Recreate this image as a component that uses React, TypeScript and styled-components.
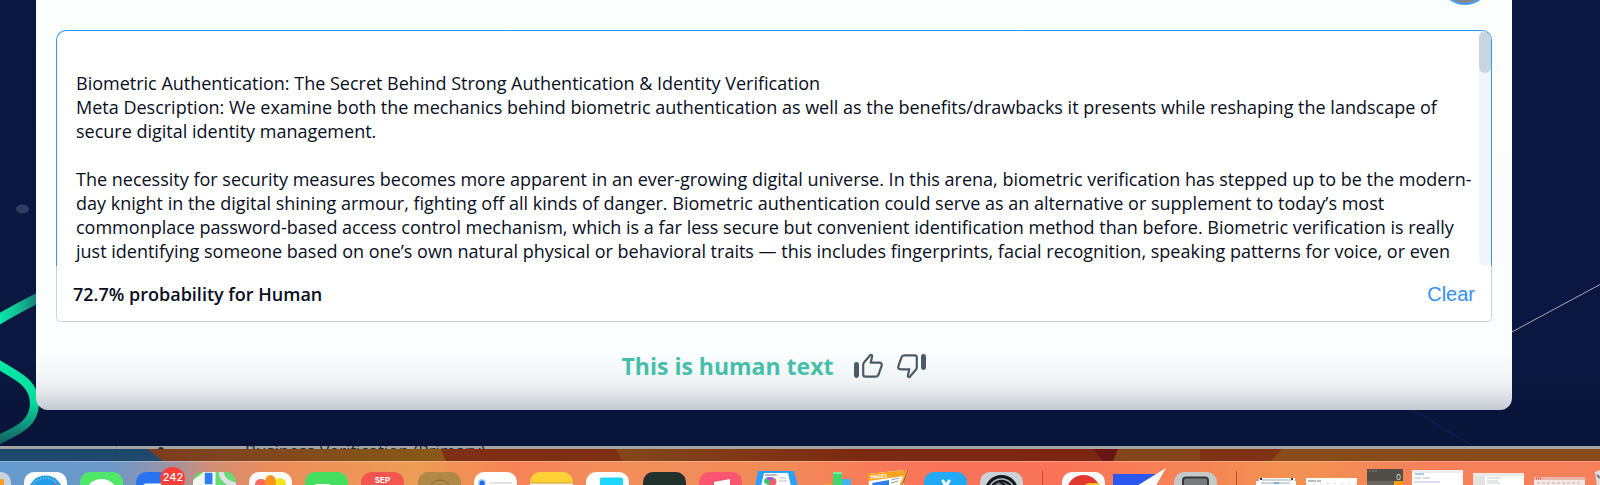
import React from "react";
import styled, { createGlobalStyle } from "styled-components";

const GlobalStyle = createGlobalStyle`
  *, *::before, *::after { box-sizing: border-box; }
  body {
    margin: 0;
    background: #f5825c;
    font-family: "Open Sans", "Noto Sans", sans-serif;
    overflow-x: hidden;
  }
`;

const Page = styled.main`
  display: flex;
  flex-direction: column;
  overflow: hidden;
`;

const Hero = styled.section`
  position: relative;
  padding: 0 88px 36px 36px;
  background: linear-gradient(#0a1741 0, #0a1740 82%, #081438 100%);
`;

const Backdrop = styled.svg<{ $side: "left" | "right" }>`
  position: absolute;
  top: 0;
  ${(p) => p.$side}: 0;
`;

const Card = styled.div`
  position: relative;
  display: flex;
  flex-direction: column;
  padding: 0 20px;
  border-radius: 0 0 12px 12px;
  background: linear-gradient(to top, #c5cad2 0, #dde1e6 14px, #f0f3f5 28px, #fbfefe 56px, #fbfffe 100%);
`;

const CardHeader = styled.header`
  display: flex;
  justify-content: flex-end;
  align-items: flex-end;
  height: 5px;
  margin-bottom: 25px;
  padding-right: 1px;
  overflow: hidden;
`;

const Avatar = styled.button`
  flex: none;
  width: 52px;
  height: 52px;
  padding: 0;
  border: 2px solid #4c9df3;
  border-radius: 50%;
  background: #818c89;
`;

const Editor = styled.div`
  display: flex;
  border: 1px solid #2f97f6;
  border-bottom: 0;
  border-radius: 10px 10px 0 0;
  background: #fff;
  overflow: hidden;
`;

const TextInput = styled.textarea`
  display: block;
  flex: 1;
  min-width: 0;
  height: 235px;
  padding: 40px 0 0 19px;
  border: 0;
  outline: 0;
  resize: none;
  overflow: hidden;
  background: transparent;
  color: #080e22;
  font: 400 18px/24px "Open Sans", "Noto Sans", sans-serif;
`;

const ScrollTrack = styled.div`
  flex: none;
  width: 12px;
  border-radius: 6px;
  background: #f1f4f8;
`;

const ScrollThumb = styled.div`
  height: 42px;
  border-radius: 6px;
  background: #c7d5df;
`;

const EditorFooter = styled.div`
  display: flex;
  align-items: center;
  justify-content: space-between;
  height: 56px;
  padding: 0 16px;
  border: 1px solid #cfd1d4;
  border-top: 0;
  border-radius: 0 0 5px 5px;
  background: #fff;
`;

const Probability = styled.output`
  color: #080e22;
  font-size: 18px;
  font-weight: 600;
  line-height: 24px;
`;

const ClearButton = styled.button`
  padding: 0;
  border: 0;
  background: none;
  color: #2f90f7;
  font: 400 20px/24px "Liberation Sans", Arial, sans-serif;
`;

const Verdict = styled.div`
  display: flex;
  align-items: center;
  justify-content: center;
  height: 88px;
`;

const VerdictText = styled.strong`
  margin-right: 21px;
  color: #45bfaa;
  font-size: 23px;
  font-weight: 700;
  line-height: 32px;
`;

const VoteButton = styled.button`
  display: flex;
  padding: 0;
  border: 0;
  background: none;
  color: #4a5a68;

  & + & {
    margin-left: 14px;
  }
`;

const WindowBehind = styled.div`
  display: flex;
  height: 3px;
  overflow: hidden;
  background: #a5a5a3;
  color: #222a36;
  font-size: 17px;
  line-height: 10px;
  white-space: nowrap;
`;

const WindowSidebar = styled.div`
  flex: none;
  width: 117px;
  border-right: 1px solid #8d8d8b;
`;

const WindowBullet = styled.div`
  flex: none;
  width: 6px;
  height: 6px;
  margin: 1px 81px 0 41px;
  border-radius: 3px;
  background: #222a36;
`;

const Wallpaper = styled.svg`
  display: block;
  width: 100%;
  height: 12px;
`;

const Dock = styled.nav`
  display: flex;
  height: 24px;
  padding-top: 10px;
  border-top: 1px solid rgba(255, 255, 255, 0.25);
  background: linear-gradient(
    to right,
    #659ace 0, #6c98c8 7%, #9b94a5 10.5%, #cf8f78 13%, #ec8c5b 17%,
    #ed9d55 26%, #f68357 32%, #f18e5a 39%, #f18b59 49%, #fa7559 57%,
    #fa7459 66%, #f58356 74%, #f29252 81%, #f6815a 89%, #f68059 100%
  );
`;

const DockGroup = styled.div<{ $grow: number }>`
  display: flex;
  flex: ${(p) => p.$grow} 1 0;
  min-width: 0;
  justify-content: space-between;
`;

const Separator = styled.span`
  flex: none;
  width: 1px;
  height: 16px;
  margin: -1px 19px 0;
  background: #c84a30;
`;

const DockItem = styled.span`
  position: relative;
  flex: none;
  height: 12px;
`;

const Icon = styled.svg`
  display: block;
  overflow: visible;
`;

const Badge = styled.span`
  position: absolute;
  top: -5px;
  right: -6px;
  width: 25px;
  height: 24px;
  border-radius: 12px;
  background: #fb3f3b;
  color: #fff;
  font: 500 11px/21px Inter, sans-serif;
  text-align: center;
`;

const ThumbIcon = ({ down = false }: { down?: boolean }) => (
  <svg width="29" height="26" viewBox="0 0 29 26" aria-hidden="true">
    <g transform={down ? "rotate(180 14.5 13)" : undefined}>
      <rect x="0" y="9" width="5" height="16" rx="2.4" fill="currentColor" />
      <path
        d="M9.2 11.5Q9.2 10.2 10.2 9.2L16.6 1.8Q18.4 1.8 18.1 3.4L16.7 9.7H25.3Q28.2 9.7 27.7 12.6L24.4 21.8Q23.8 23.7 21.8 23.7H11.5Q9.2 23.7 9.2 21.5Z"
        fill="none"
        stroke="currentColor"
        strokeWidth="2.2"
        strokeLinejoin="round"
      />
    </g>
  </svg>
);

type AppIcon = { name: string; fill: string; art?: React.ReactNode; badge?: string; bare?: boolean };

const apps: AppIcon[] = [
  {
    name: "Safari", fill: "#fff",
    art: (
      <>
        <circle cx="21.5" cy="21" r="17.5" fill="#239be8" />
        <circle cx="21.5" cy="21" r="15" fill="none" stroke="#77c8f5" strokeWidth="2" strokeDasharray="1 1.6" />
        <path d="M35 10 23 21 20 18Z" fill="#ef4a43" />
      </>
    ),
  },
  { name: "Messages", fill: "#50e869", art: <ellipse cx="21.5" cy="20" rx="15" ry="13" fill="#fff" /> },
  { name: "Mail", fill: "#2874f3", art: <rect x="7" y="11.5" width="29" height="20" rx="3" fill="#fff" />, badge: "242" },
  {
    name: "Maps", fill: "#5fdd6b",
    art: (
      <>
        <path d="M0 8 11 0V13H0Z" fill="#f3f7f2" />
        <path d="M11 0H21V13H11Z" fill="#2e7df6" stroke="#fff" strokeWidth="1.5" />
        <path d="M23 0H43V13H23Z" fill="#68db75" />
        <path d="M28 0Q30 11 43 13" fill="none" stroke="#dfe2e6" strokeWidth="5" />
        <path d="M21 0V13" stroke="#fff" strokeWidth="3" />
      </>
    ),
  },
  {
    name: "Photos", fill: "#fff",
    art: (
      <>
        <ellipse cx="12" cy="12" rx="6" ry="5" fill="#fb6a5c" />
        <ellipse cx="31" cy="12" rx="6" ry="6" fill="#f4e51d" />
        <ellipse cx="21.5" cy="10" rx="5.5" ry="7" fill="#fb951c" />
      </>
    ),
  },
  { name: "FaceTime", fill: "#45df5f", art: <rect x="9" y="12" width="17" height="12" rx="3" fill="#fff" /> },
  {
    name: "Calendar", fill: "#f6564f",
    art: (
      <text x="21.5" y="11" fill="#fff" fontFamily="Inter" fontSize="8" fontWeight="700" textAnchor="middle">SEP</text>
    ),
  },
  {
    name: "Contacts", fill: "#b08949",
    art: <circle cx="22" cy="19" r="11" fill="none" stroke="#86683a" strokeWidth="1" />,
  },
  {
    name: "Reminders", fill: "#fff",
    art: (
      <>
        <circle cx="8" cy="11" r="4" fill="#b7d2fb" />
        <circle cx="8" cy="11" r="2.6" fill="#216df2" />
        <path d="M16 11H38" stroke="#c9c9cb" strokeWidth="1" />
      </>
    ),
  },
  {
    name: "Notes", fill: "#fdd033",
    art: <><path d="M0 11H43V13H0Z" fill="#f7f3e6" /><path d="M0 11H43" stroke="#cfa435" strokeWidth="1" /></>,
  },
  { name: "Displays", fill: "#fff", art: <rect x="14" y="5.5" width="23" height="18" rx="2" fill="#1ed5fb" /> },
  { name: "Terminal", fill: "#20302d" },
  { name: "Music", fill: "#fb5570", art: <path d="M15 10 31 7V14H15Z" fill="#fff" /> },
  {
    name: "Keynote", fill: "none", bare: true,
    art: (
      <>
        <path d="M3-1H39L43 14H0Z" fill="#2b9ffb" />
        <path d="M9 1H33L36 14H6Z" fill="#fff" />
        <path d="M10 3H22" stroke="#777" strokeWidth="1" />
        <ellipse cx="15" cy="9" rx="6" ry="4" fill="#39c575" />
        <path d="M15 9 11 6Q15 4 19 6Z" fill="#b64de2" />
        <path d="M15 9 20 6Q23 10 20 13H14Z" fill="#f55c6b" />
        <path d="M24 6H31M24 9H32" stroke="#bbb" strokeWidth="1" />
      </>
    ),
  },
  {
    name: "Numbers", fill: "none", bare: true,
    art: (
      <>
        <rect x="13" y="12" width="8" height="3" fill="#f3a733" />
        <rect x="22" y="0" width="9" height="14" fill="#3fd76e" />
        <path d="M22 0H31V2H22Z" fill="#7eea9b" />
        <rect x="31" y="7" width="9" height="7" fill="#42b5f0" />
      </>
    ),
  },
  {
    name: "Pages", fill: "none", bare: true,
    art: (
      <>
        <path d="M0 2 36-2 36 14H1Z" fill="#fff" />
        <path d="M0 2 36-2V4L0 9Z" fill="#fba421" />
        <path d="M4 11 21 8V14H5Z" fill="#2d83e7" />
        <text x="3" y="7" fill="#fff" fontFamily="Inter" fontSize="5" fontWeight="700" transform="rotate(-6 3 7)">PAGES</text>
        <path d="M23 8 31 6M23 11 30 9" stroke="#999" strokeWidth="1" />
        <path d="M38-2 41-1 34 14H31Z" fill="#f0a93c" />
        <path d="M40-2 34 14" stroke="#985a26" strokeWidth="1" />
      </>
    ),
  },
  {
    name: "App Store", fill: "#20aaf6",
    art: <path d="M19 9 22 14 25 9" fill="none" stroke="#fff" strokeWidth="3" strokeLinecap="round" />,
  },
  {
    name: "System Settings", fill: "#cbd3d8",
    art: (
      <>
        <circle cx="21.5" cy="20" r="17" fill="#15191c" />
        <circle cx="21.5" cy="20" r="13" fill="none" stroke="#b4babe" strokeWidth="1.5" />
        <circle cx="21.5" cy="20" r="10" fill="#71797d" />
        <path d="M20 10 25 13" stroke="#15191c" strokeWidth="2" />
      </>
    ),
  },
];

const AppTile = ({ app }: { app: AppIcon }) => {
  const clip = `tile-${app.name.replace(" ", "-")}`;
  return (
    <DockItem>
      <Icon width="43" height="13" viewBox="0 0 43 13" role="img" aria-label={app.name}>
        <clipPath id={clip}>
          <rect width="43" height="43" rx="10" />
        </clipPath>
        <g clipPath={app.bare ? undefined : `url(#${clip})`}>
          <rect width="43" height="43" fill={app.fill} />
          {app.art}
        </g>
      </Icon>
      {app.badge && <Badge>{app.badge}</Badge>}
    </DockItem>
  );
};

const LaunchpadEdge = () => (
  <DockItem>
    <Icon width="24" height="13" viewBox="0 0 24 13" aria-hidden="true">
      <rect x="-32" width="43" height="43" rx="10" fill="#c5d3df" />
      <rect x="-4" y="7" width="8" height="8" rx="2" fill="#f99b24" />
    </Icon>
  </DockItem>
);

const RecentApps = () => (
  <>
    <Icon width="43" height="13" viewBox="0 0 43 13" role="img" aria-label="Browser">
      <rect width="43" height="43" rx="10" fill="#fff" />
      <circle cx="21.5" cy="20" r="17" fill="#e3382f" />
      <path d="M23 13Q24 11 28 11H37L38 15H23Z" fill="#fcc42a" />
    </Icon>
    <Icon width="53" height="13" viewBox="0 0 53 13" role="img" aria-label="Paper plane">
      <path d="M0 2H42V15H0Z" fill="#2a57ee" />
      <path d="M53-4 22 15H42Z" fill="#fff" />
    </Icon>
    <Icon width="43" height="13" viewBox="0 0 43 13" role="img" aria-label="Utility">
      <rect width="43" height="43" rx="10" fill="#c7c8c8" />
      <rect x="9" y="5.5" width="25" height="20" rx="3" fill="#777b7d" stroke="#33373a" strokeWidth="2" />
    </Icon>
  </>
);

const MinimisedWindows = () => (
  <>
    <Icon width="40" height="13" viewBox="0 0 40 13" role="img" aria-label="Document">
      <path d="M3 6H39V9H3Z" fill="#f8fafc" />
      <path d="M0 9H40V14H0Z" fill="#fff" />
      <path d="M4 7H6M35 7H37" stroke="#24324b" strokeWidth="2" />
      <path d="M6 8H36M5 11H34" stroke="#9caabd" strokeWidth="1" />
      <path d="M18 11H23" stroke="#2e83d8" strokeWidth="1" />
    </Icon>
    <Icon width="51" height="13" viewBox="0 0 51 13" role="img" aria-label="Calendar window">
      <path d="M0 6H51V14H0Z" fill="#fff" />
      <path d="M2 9H15" stroke="#777" strokeWidth="1" strokeDasharray="8 1" />
      <path d="M0 11.5H51" stroke="#ddd" strokeWidth="1" strokeDasharray="2 5" />
    </Icon>
    <Icon width="36" height="13" viewBox="0 0 36 13" role="img" aria-label="Calculator">
      <path d="M0-3H36V14H0Z" fill="#504e46" />
      <path d="M0 9H27V14H0Z" fill="#69665f" />
      <path d="M27 9H36V14H27Z" fill="#fc9d0b" />
      <path d="M2-1H10" stroke="#817e76" strokeWidth="1" strokeDasharray="2 1" />
      <text x="29" y="8" fill="#ddd" fontFamily="Inter" fontSize="8">0</text>
    </Icon>
    <Icon width="51" height="13" viewBox="0 0 51 13" role="img" aria-label="Article window">
      <path d="M0-2H51V14H0Z" fill="#fff" />
      <path d="M0-2H51V1H0Z" fill="#eeeded" />
      <path d="M3 2H12" stroke="#5498d5" strokeWidth="1" />
      <path d="M2 6H20" stroke="#bbb" strokeWidth="1" strokeDasharray="7 2" />
      <path d="M2 10H28" stroke="#b3b9ee" strokeWidth="1" />
    </Icon>
    <Icon width="51" height="13" viewBox="0 0 51 13" role="img" aria-label="Notes window">
      <path d="M0 1H51V14H0Z" fill="#fff" />
      <path d="M0 1H51V4H0Z" fill="#ecebea" />
      <path d="M0 4H12V14H0Z" fill="#e5e3df" />
      <path d="M14 6H28M14 9H25M14 11H27" stroke="#c7cdd4" strokeWidth="1" />
    </Icon>
    <Icon width="51" height="13" viewBox="0 0 51 13" role="img" aria-label="Browser window">
      <path d="M0 5H51V14H0Z" fill="#f4e8e6" />
      <path d="M0 5H51V8H0Z" fill="#e8b8ad" />
      <path d="M2 6.5H7" stroke="#d75a4f" strokeWidth="2" strokeDasharray="1 1" />
      <path d="M3 11H46" stroke="#d0aaa5" strokeWidth="1" strokeDasharray="3 2" />
    </Icon>
    <Icon width="5" height="13" viewBox="0 0 5 13" aria-hidden="true">
      <path d="M0 0 5-2V14H2Z" fill="#dedfe0" />
      <path d="M2 3 5 6" stroke="#777" strokeWidth="2" />
    </Icon>
  </>
);

const article = `Biometric Authentication: The Secret Behind Strong Authentication & Identity Verification
Meta Description: We examine both the mechanics behind biometric authentication as well as the benefits/drawbacks it presents while reshaping the landscape of secure digital identity management.

The necessity for security measures becomes more apparent in an ever-growing digital universe. In this arena, biometric verification has stepped up to be the modern-day knight in the digital shining armour, fighting off all kinds of danger. Biometric authentication could serve as an alternative or supplement to today’s most commonplace password-based access control mechanism, which is a far less secure but convenient identification method than before. Biometric verification is really just identifying someone based on one’s own natural physical or behavioral traits — this includes fingerprints, facial recognition, speaking patterns for voice, or even`;

export default function App() {
  const [text, setText] = React.useState(article);

  return (
    <>
      <GlobalStyle />
      <Page>
        <Hero>
          <Backdrop $side="left" width="60" height="446" viewBox="0 0 60 446" aria-hidden="true">
            <defs>
              <linearGradient id="strand-up" x1="0" x2="36" y1="0" y2="0" gradientUnits="userSpaceOnUse">
                <stop offset="0" stopColor="#08e6a5" />
                <stop offset="0.5" stopColor="#12c095" />
                <stop offset="1" stopColor="#197f78" />
              </linearGradient>
              <linearGradient id="strand-down" x1="0" x2="0" y1="362" y2="442" gradientUnits="userSpaceOnUse">
                <stop offset="0" stopColor="#02e8a4" />
                <stop offset="0.5" stopColor="#08dca0" />
                <stop offset="1" stopColor="#136160" />
              </linearGradient>
            </defs>
            <ellipse cx="22.5" cy="209" rx="6.5" ry="4.5" fill="#303c60" />
            <path d="M-4 321 Q14 310 40 297" fill="none" stroke="url(#strand-up)" strokeWidth="10" />
            <path d="M-4 363C14 375 34 381 34.5 403C34.500 425 16 431-4 441" fill="none" stroke="url(#strand-down)" strokeWidth="9" />
          </Backdrop>
          <Backdrop $side="right" width="200" height="446" viewBox="0 0 200 446" aria-hidden="true">
            <path d="M110 333 200 284.5" stroke="#a5abba" strokeWidth="1" />
            <path d="M13 410 73 446" stroke="#0d1b50" strokeWidth="1.5" />
          </Backdrop>
          <Card>
            <CardHeader>
              <Avatar aria-label="Account" />
            </CardHeader>
            <Editor>
              <TextInput
                aria-label="Text to check"
                spellCheck={false}
                value={text}
                onChange={(e) => setText(e.target.value)}
              />
              <ScrollTrack>
                <ScrollThumb />
              </ScrollTrack>
            </Editor>
            <EditorFooter>
              <Probability>72.7% probability for Human</Probability>
              <ClearButton type="button" onClick={() => setText("")}>Clear</ClearButton>
            </EditorFooter>
            <Verdict>
              <VerdictText>This is human text</VerdictText>
              <VoteButton type="button" aria-label="Agree"><ThumbIcon /></VoteButton>
              <VoteButton type="button" aria-label="Disagree"><ThumbIcon down /></VoteButton>
            </Verdict>
          </Card>
        </Hero>
        <WindowBehind>
          <WindowSidebar />
          <WindowBullet />
          Business Verification (Primary)
        </WindowBehind>
        <Wallpaper viewBox="0 0 1600 12" preserveAspectRatio="none" aria-hidden="true">
          <defs>
            <linearGradient id="dune-a"><stop offset="0" stopColor="#7d3c20" /><stop offset="1" stopColor="#885a18" /></linearGradient>
            <linearGradient id="dune-b"><stop offset="0" stopColor="#84471a" /><stop offset="0.5" stopColor="#7c2a13" /><stop offset="1" stopColor="#7c2512" /></linearGradient>
          </defs>
          <path d="M0 0H1600V12H0Z" fill="#84451a" />
          <path d="M0 0H148L163 12H0Z" fill="#1e496d" />
          <path d="M148 0H441L446 12H163Z" fill="url(#dune-a)" />
          <path d="M441 0H616L622 12H446Z" fill="#7f2f14" />
          <path d="M616 0H1093L1102 12H622Z" fill="url(#dune-b)" />
          <path d="M1093 0H1118L1113 12H1102Z" fill="#681611" />
          <path d="M1200 0H1282L1271 12H1200Z" fill="#7f3214" />
          <path d="M1282 0H1600V12H1271Z" fill="#884c1b" />
        </Wallpaper>
        <Dock aria-label="Dock">
          <LaunchpadEdge />
          <DockGroup $grow={999}>
            {apps.map((app) => <AppTile key={app.name} app={app} />)}
          </DockGroup>
          <Separator />
          <DockGroup $grow={155}>
            <RecentApps />
          </DockGroup>
          <Separator />
          <DockGroup $grow={344}>
            <MinimisedWindows />
          </DockGroup>
        </Dock>
      </Page>
    </>
  );
}
